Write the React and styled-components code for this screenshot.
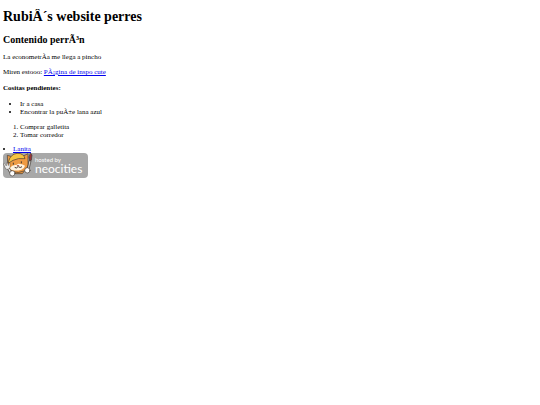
import React from "react";
import styled, { createGlobalStyle } from "styled-components";

const GlobalStyle = createGlobalStyle`
  body {
    margin: 9px 3px;
    background: #fff;
    color: #000;
    font: 7px/8px "Liberation Serif", "Times New Roman", serif;
  }
`;

const Title = styled.h1`
  margin: 0 0 9px;
  font-size: 14px;
  line-height: 16px;
`;

const Subtitle = styled.h2`
  margin: 0 0 7px;
  font-size: 10px;
  line-height: 12px;
`;

const Paragraph = styled.p`
  margin: 0 0 7px;
`;

const ListTitle = styled.h4`
  margin: 8px 0;
  font-size: 7px;
`;

const Link = styled.a`
  color: #0000ee;
  text-decoration: underline;
`;

const BulletList = styled.ul`
  margin: 0 0 7px;
  padding-left: 17px;
`;

const NumberList = styled.ol`
  margin: 0 0 6px;
  padding-left: 17px;
`;

const LinkList = styled.ul`
  margin: 0;
  padding: 0;
  list-style-position: inside;
`;

const Badge = styled.a`
  display: flex;
  width: fit-content;
  align-items: center;
  box-sizing: border-box;
  height: 25px;
  padding-right: 6px;
  border-radius: 4px;
  background: #a8a8a8;
  color: #fff;
  font-family: Lato, sans-serif;
  text-decoration: none;
`;

const Mascot = styled.svg`
  display: block;
  width: 30px;
  height: 25px;
  margin-right: 2px;
`;

const BadgeText = styled.span`
  display: flex;
  flex-direction: column;
  padding-bottom: 1px;
`;

const Hosted = styled.span`
  font-size: 6px;
  line-height: 8px;
`;

const Brand = styled.span`
  font-size: 12px;
  line-height: 10px;
`;

function Cat() {
  return (
    <Mascot viewBox="0 0 90 75" aria-hidden="true">
      <g stroke="#403832" strokeWidth="2" strokeLinejoin="round" strokeLinecap="round">
        <path d="M31 51 38 62 58 62 69 48Z" fill="#e79643" />
        <path d="M14 29 13 7 27 11 61 9 75 2 75 27Q78 45 62 54Q47 62 29 56Q10 47 14 29Z" fill="#ee9b43" />
        <path d="M17 24Q22 4 42 1Q62 0 66 17Q45 14 30 22L17 30Z" fill="#f4c443" />
        <path d="M21 44Q29 34 40 36L46 32Q58 32 66 38Q64 47 55 50Q39 55 27 51Q20 49 21 44Z" fill="#fff3df" stroke="none" />
        <path d="m14 46 5-1 9 15-5 2Z" fill="#eee" />
        <path d="m2 32 2-1 6 8 1-10 2-1 3 10 3-8 2 0 0 13-5 6-7-1Z" fill="#eee" strokeWidth="1" />
        <path d="m83 1 4 5-2 16-5 1-2-10Z" fill="#9c3438" />
        <path d="m79 23 5 1-6 25-4-1Z" fill="#d9d6d0" />
        <circle cx="28" cy="61" r="8" fill="#fff" />
        <circle cx="73" cy="52" r="8" fill="#fff" />
      </g>
      <path d="M31 29v6M55 25v6M45 41q-5 7-10 2M46 41q6 5 11 0" fill="none" stroke="#403832" strokeWidth="3" />
      <path d="M41 36h8l-4 5Z" fill="#aa554b" />
    </Mascot>
  );
}

export default function App() {
  return (
    <main>
      <GlobalStyle />
      <Title>RubiÂ´s website perres</Title>
      <Subtitle>Contenido perrÃ³n</Subtitle>
      <Paragraph>La econometrÃ&shy;a me llega a pincho</Paragraph>
      <Paragraph>
        Miren estooo: <Link href="#inspo">PÃ¡gina de inspo cute</Link>
      </Paragraph>
      <ListTitle>Cositas pendientes:</ListTitle>
      <BulletList>
        <li>Ir a casa</li>
        <li>Encontrar la puÃ±e lana azul</li>
      </BulletList>
      <NumberList>
        <li>Comprar galletita</li>
        <li>Tomar corredor</li>
      </NumberList>
      <LinkList>
        <li><Link href="#lanita">Lanita</Link></li>
      </LinkList>
      <Badge href="#neocities">
        <Cat />
        <BadgeText>
          <Hosted>hosted by</Hosted>
          <Brand>neocities</Brand>
        </BadgeText>
      </Badge>
    </main>
  );
}
